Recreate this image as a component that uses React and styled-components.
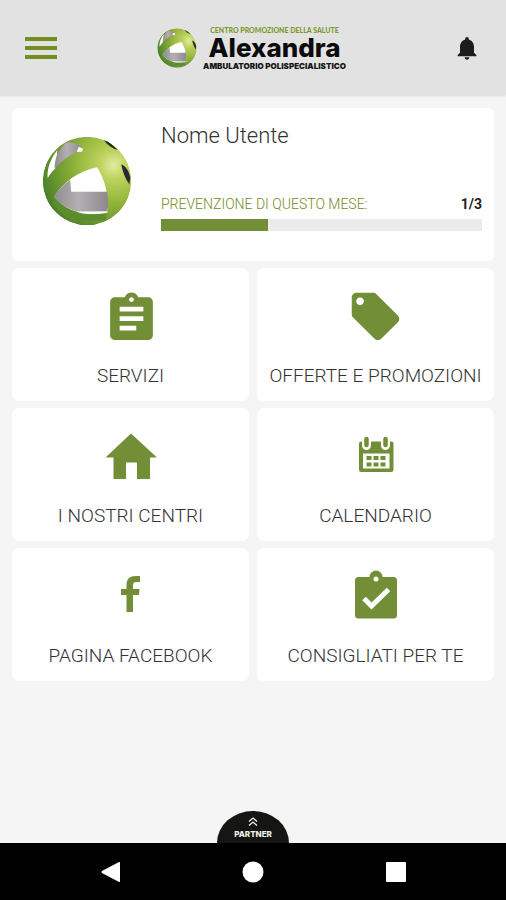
import React, { useId } from "react";
import styled, { createGlobalStyle } from "styled-components";

const GREEN = "#728f38";

const GlobalStyle = createGlobalStyle`
  * { box-sizing: border-box; }
  body { margin: 0; background: #f5f5f5; }
  button { font: inherit; color: inherit; border: 0; padding: 0; background: none; cursor: pointer; }
  svg { display: block; }
`;

const Screen = styled.div`
  display: flex;
  flex-direction: column;
  min-height: 100vh;
  font-family: Roboto, "Liberation Sans", sans-serif;
  color: #333;
`;

const Header = styled.header`
  display: grid;
  grid-template-columns: 1fr auto 1fr;
  align-items: center;
  height: 95px;
  padding: 0 25px;
  background: #e2e2e2;
  box-shadow: 0 1px 2px rgba(0, 0, 0, 0.12);
`;

const HeaderButton = styled.button`
  justify-self: ${(p) => p.$side};
`;

const Brand = styled.div`
  display: flex;
  align-items: center;
  gap: 3px;
`;

const BrandText = styled.div`
  display: flex;
  flex-direction: column;
  align-items: center;
  width: 150px;
  white-space: nowrap;
`;

const BrandOver = styled.span`
  font: 900 7px/8px Lato, sans-serif;
  color: #7c9a2c;
`;

const BrandName = styled.span`
  font: 800 26px/28px Inter, sans-serif;
  color: #0b0b0b;
`;

const BrandUnder = styled.span`
  font: 900 8px/8px Inter, sans-serif;
  color: #161616;
`;

const Main = styled.main`
  flex: 1;
  display: flex;
  flex-direction: column;
  gap: 7px;
  padding: 13px 12px;
`;

const Profile = styled.section`
  display: grid;
  grid-template-columns: 90px 1fr;
  column-gap: 29px;
  padding: 14px 12px 30px 30px;
  background: #fff;
  border-radius: 6px;
`;

const Avatar = styled.div`
  padding: 14px 0 5px;
`;

const ProfileBody = styled.div`
  display: flex;
  flex-direction: column;
  justify-content: space-between;
`;

const UserName = styled.h1`
  margin: 0;
  font-size: 22px;
  line-height: 28px;
  font-weight: 300;
`;

const ProgressHead = styled.div`
  display: flex;
  justify-content: space-between;
  margin-bottom: 6px;
  font-size: 14px;
  line-height: 18px;
`;

const ProgressLabel = styled.span`
  font-weight: 300;
  color: #6f8c1c;
`;

const ProgressCount = styled.span`
  font-weight: 700;
  color: #222;
`;

const Track = styled.div`
  height: 12px;
  background: #ebebeb;
`;

const Fill = styled.div`
  height: 100%;
  background: ${GREEN};
`;

const Tiles = styled.nav`
  display: grid;
  grid-template-columns: 1fr 1fr;
  gap: 7px 8px;
`;

const Tile = styled.button`
  display: flex;
  flex-direction: column;
  align-items: center;
  gap: 19px;
  padding: 20px 0 13px;
  background: #fff;
  border-radius: 7px;
`;

const TileLabel = styled.span`
  font-size: 19px;
  line-height: 24px;
  font-weight: 300;
  white-space: nowrap;
`;

const PartnerTab = styled.button`
  align-self: center;
  display: flex;
  flex-direction: column;
  align-items: center;
  gap: 3px;
  width: 72px;
  height: 32px;
  padding-top: 6px;
  background: #151513;
  border-radius: 36px 36px 0 0 / 32px 32px 0 0;
`;

const PartnerLabel = styled.span`
  font: 800 8px/10px Inter, sans-serif;
  color: #f2f2ea;
`;

const SystemBar = styled.footer`
  display: flex;
  justify-content: space-between;
  align-items: center;
  height: 57px;
  padding: 0 99px 0 101px;
  background: #000;
`;

function Emblem({ size }) {
  const id = useId();
  const ball = `${id}ball`;
  const steel = `${id}steel`;
  const clip = `${id}clip`;
  return (
    <svg width={size} height={size} viewBox="37 48 266 268" aria-hidden="true">
      <defs>
        <radialGradient id={ball} cx="0.8" cy="0.32" r="0.9">
          <stop offset="0" stopColor="#e3eca0" />
          <stop offset="0.18" stopColor="#bdd25c" />
          <stop offset="0.45" stopColor="#97b73d" />
          <stop offset="0.78" stopColor="#62912f" />
          <stop offset="1" stopColor="#437726" />
        </radialGradient>
        <linearGradient id={steel} x1="0" y1="0" x2="1" y2="0">
          <stop offset="0" stopColor="#8f8b8f" />
          <stop offset="0.45" stopColor="#b3afb3" />
          <stop offset="1" stopColor="#8d898d" />
        </linearGradient>
        <clipPath id={clip}><circle cx="170" cy="182" r="132" /></clipPath>
      </defs>
      <g clipPath={`url(#${clip})`}>
        <circle cx="170" cy="182" r="132" fill={`url(#${ball})`} />
        <path d="M53 174 C50 150 60 116 82 90 L76 144 C66 154 58 164 53 174Z" fill="#fff" />
        <path d="M74 147 C72 120 84 90 106 69 C122 65 140 70 155 80 L140 98 C112 108 90 126 74 147Z" fill={`url(#${steel})`} />
        <path d="M139 96 L146 80 L158 86 L156 94Z" fill="#fff" />
        <path d="M72 230 C98 186 144 152 200 141 C222 174 236 224 231 276 C170 290 112 276 72 230Z" fill="#fff" />
        <path d="M72 230 C84 210 100 192 120 178 L123 214 L230 214 C234 234 234 256 231 272 L142 273 C112 266 90 250 72 230Z" fill={`url(#${steel})`} />
        <path d="M72 230 C92 254 114 268 142 275 L142 281 L228 281 L226 300 L120 300 L66 250Z" fill="#5c8d2c" />
        <path d="M220 60 L234 64 L262 90 C246 86 232 76 220 60Z" fill="#24301a" />
        <path d="M272 132 C284 136 294 150 299 172 L296 192 C284 176 276 154 272 132Z" fill="#2b2a30" />
      </g>
    </svg>
  );
}

const iconProps = { width: 57, height: 57, viewBox: "0 0 57 57", fill: GREEN, "aria-hidden": true };

const ListIcon = () => (
  <svg {...iconProps}>
    <g transform="translate(1 2) scale(2.375)">
      <path d="M19 3h-4.18C14.4 1.84 13.3 1 12 1c-1.3 0-2.4.84-2.82 2H5c-1.1 0-2 .9-2 2v14c0 1.1.9 2 2 2h14c1.1 0 2-.9 2-2V5c0-1.1-.9-2-2-2zm-7 0c.55 0 1 .45 1 1s-.45 1-1 1-1-.45-1-1 .45-1 1-1zm2 14H7v-2h7v2zm3-4H7v-2h10v2zm0-4H7V7h10v2z" />
    </g>
  </svg>
);

const TagIcon = () => (
  <svg {...iconProps}>
    <g transform="scale(2.375)">
      <path d="M21.41 11.58l-9-9C12.05 2.22 11.55 2 11 2H4c-1.1 0-2 .9-2 2v7c0 .55.22 1.05.59 1.42l9 9c.36.36.86.58 1.41.58.55 0 1.05-.22 1.41-.59l7-7c.37-.36.59-.86.59-1.41 0-.55-.23-1.06-.59-1.42zM5.5 7.2C4.6 7.2 3.9 6.5 3.9 5.6S4.6 4 5.5 4s1.6.7 1.6 1.6S6.4 7.2 5.5 7.2z" />
    </g>
  </svg>
);

const HomeIcon = () => (
  <svg {...iconProps}>
    <path d="M29 5.5L55 29.5H48V51H35V34.5H24V51H11.5V29.5H3.5Z" />
  </svg>
);

const CalendarIcon = () => (
  <svg {...iconProps}>
    <path d="M12 15.5Q12 13.5 14 13.5H44.5Q46.5 13.5 46.5 15.5V41.5Q46.5 44 44 44H14.5Q12 44 12 41.5ZM16 25.5V40.5H42.5V25.5Z" fillRule="evenodd" />
    <path d="M19.5 10V17.5M38.5 10V17.5" stroke="#fff" strokeWidth="9" strokeLinecap="round" />
    <path d="M19.5 11V17M38.5 11V17" stroke={GREEN} strokeWidth="4.5" strokeLinecap="round" />
    <path d="M19.5 28h5v4h-5zM26.5 28h5v4h-5zM33.5 28h5v4h-5zM19.5 34.5h5v4h-5zM26.5 34.5h5v4h-5zM33.5 34.5h5v4h-5z" />
  </svg>
);

const FacebookIcon = () => (
  <svg {...iconProps}>
    <path d="M38 8V14H34.5C32 14 31 15 31 17.5V21H37.5L37 27H31V44H24.5V27H19V21H24.5V17C24.5 11 28 8 33.5 8Z" />
  </svg>
);

const CheckIcon = () => (
  <svg {...iconProps}>
    <path d="M11.5 9H22.5A6.5 6.5 0 0 1 35.5 9H46.5Q50 9 50 12.5V47Q50 50.5 46.5 50.5H11.5Q8 50.5 8 47V12.500Q8 9 11.5 9Z" />
    <circle cx="29" cy="11" r="2.5" fill="#fff" />
    <path d="M17 30.5L24.5 38L41.5 21.5" fill="none" stroke="#fff" strokeWidth="5" />
  </svg>
);

const ITEMS = [
  ["SERVIZI", ListIcon],
  ["OFFERTE E PROMOZIONI", TagIcon],
  ["I NOSTRI CENTRI", HomeIcon],
  ["CALENDARIO", CalendarIcon],
  ["PAGINA FACEBOOK", FacebookIcon],
  ["CONSIGLIATI PER TE", CheckIcon],
];

export default function App() {
  const done = 1;
  const total = 3;
  return (
    <Screen>
      <GlobalStyle />
      <Header>
        <HeaderButton $side="start" aria-label="Menu">
          <svg width="32" height="22" viewBox="0 0 32 22" fill="#728f22">
            <path d="M0 0h32v4H0zM0 9h32v4H0zM0 18h32v4H0z" />
          </svg>
        </HeaderButton>
        <Brand>
          <Emblem size={40} />
          <BrandText>
            <BrandOver>CENTRO PROMOZIONE DELLA SALUTE</BrandOver>
            <BrandName>Alexandra</BrandName>
            <BrandUnder>AMBULATORIO POLISPECIALISTICO</BrandUnder>
          </BrandText>
        </Brand>
        <HeaderButton $side="end" aria-label="Notifiche">
          <svg width="28" height="28" viewBox="0 0 24 24" fill="#1c1c1c">
            <path d="M12 22c1.1 0 2-.9 2-2h-4c0 1.1.89 2 2 2zm6-6v-5c0-3.07-1.64-5.64-4.5-6.32V4c0-.83-.67-1.5-1.5-1.5s-1.5.67-1.5 1.5v.68C7.63 5.36 6 7.92 6 11v5l-2 2v1h16v-1l-2-2z" />
          </svg>
        </HeaderButton>
      </Header>
      <Main>
        <Profile>
          <Avatar><Emblem size={90} /></Avatar>
          <ProfileBody>
            <UserName>Nome Utente</UserName>
            <div>
              <ProgressHead>
                <ProgressLabel id="progress-label">PREVENZIONE DI QUESTO MESE:</ProgressLabel>
                <ProgressCount>{done}/{total}</ProgressCount>
              </ProgressHead>
              <Track role="progressbar" aria-labelledby="progress-label" aria-valuenow={done} aria-valuemin={0} aria-valuemax={total}>
                <Fill style={{ width: `${(done / total) * 100}%` }} />
              </Track>
            </div>
          </ProfileBody>
        </Profile>
        <Tiles>
          {ITEMS.map(([label, Icon]) => (
            <Tile key={label}>
              <Icon />
              <TileLabel>{label}</TileLabel>
            </Tile>
          ))}
        </Tiles>
      </Main>
      <PartnerTab>
        <svg width="10" height="9" viewBox="0 0 10 9" fill="none" stroke="#f2f2ea" strokeWidth="1.3" aria-hidden="true">
          <path d="M1 4.5L5 1L9 4.5M1 8.5L5 5L9 8.5" />
        </svg>
        <PartnerLabel>PARTNER</PartnerLabel>
      </PartnerTab>
      <SystemBar>
        <button aria-label="Indietro">
          <svg width="20" height="22" viewBox="0 0 20 22" fill="#fff"><path d="M1 10L18 1Q19 0.5 19 2V20Q19 21.5 18 21L1 12Q0 11 1 10Z" /></svg>
        </button>
        <button aria-label="Home">
          <svg width="22" height="22" viewBox="0 0 22 22" fill="#fff"><circle cx="11" cy="11" r="10.5" /></svg>
        </button>
        <button aria-label="Recenti">
          <svg width="22" height="22" viewBox="0 0 22 22" fill="#fff"><rect x="1" y="1" width="20" height="20" rx="1" /></svg>
        </button>
      </SystemBar>
    </Screen>
  );
}
